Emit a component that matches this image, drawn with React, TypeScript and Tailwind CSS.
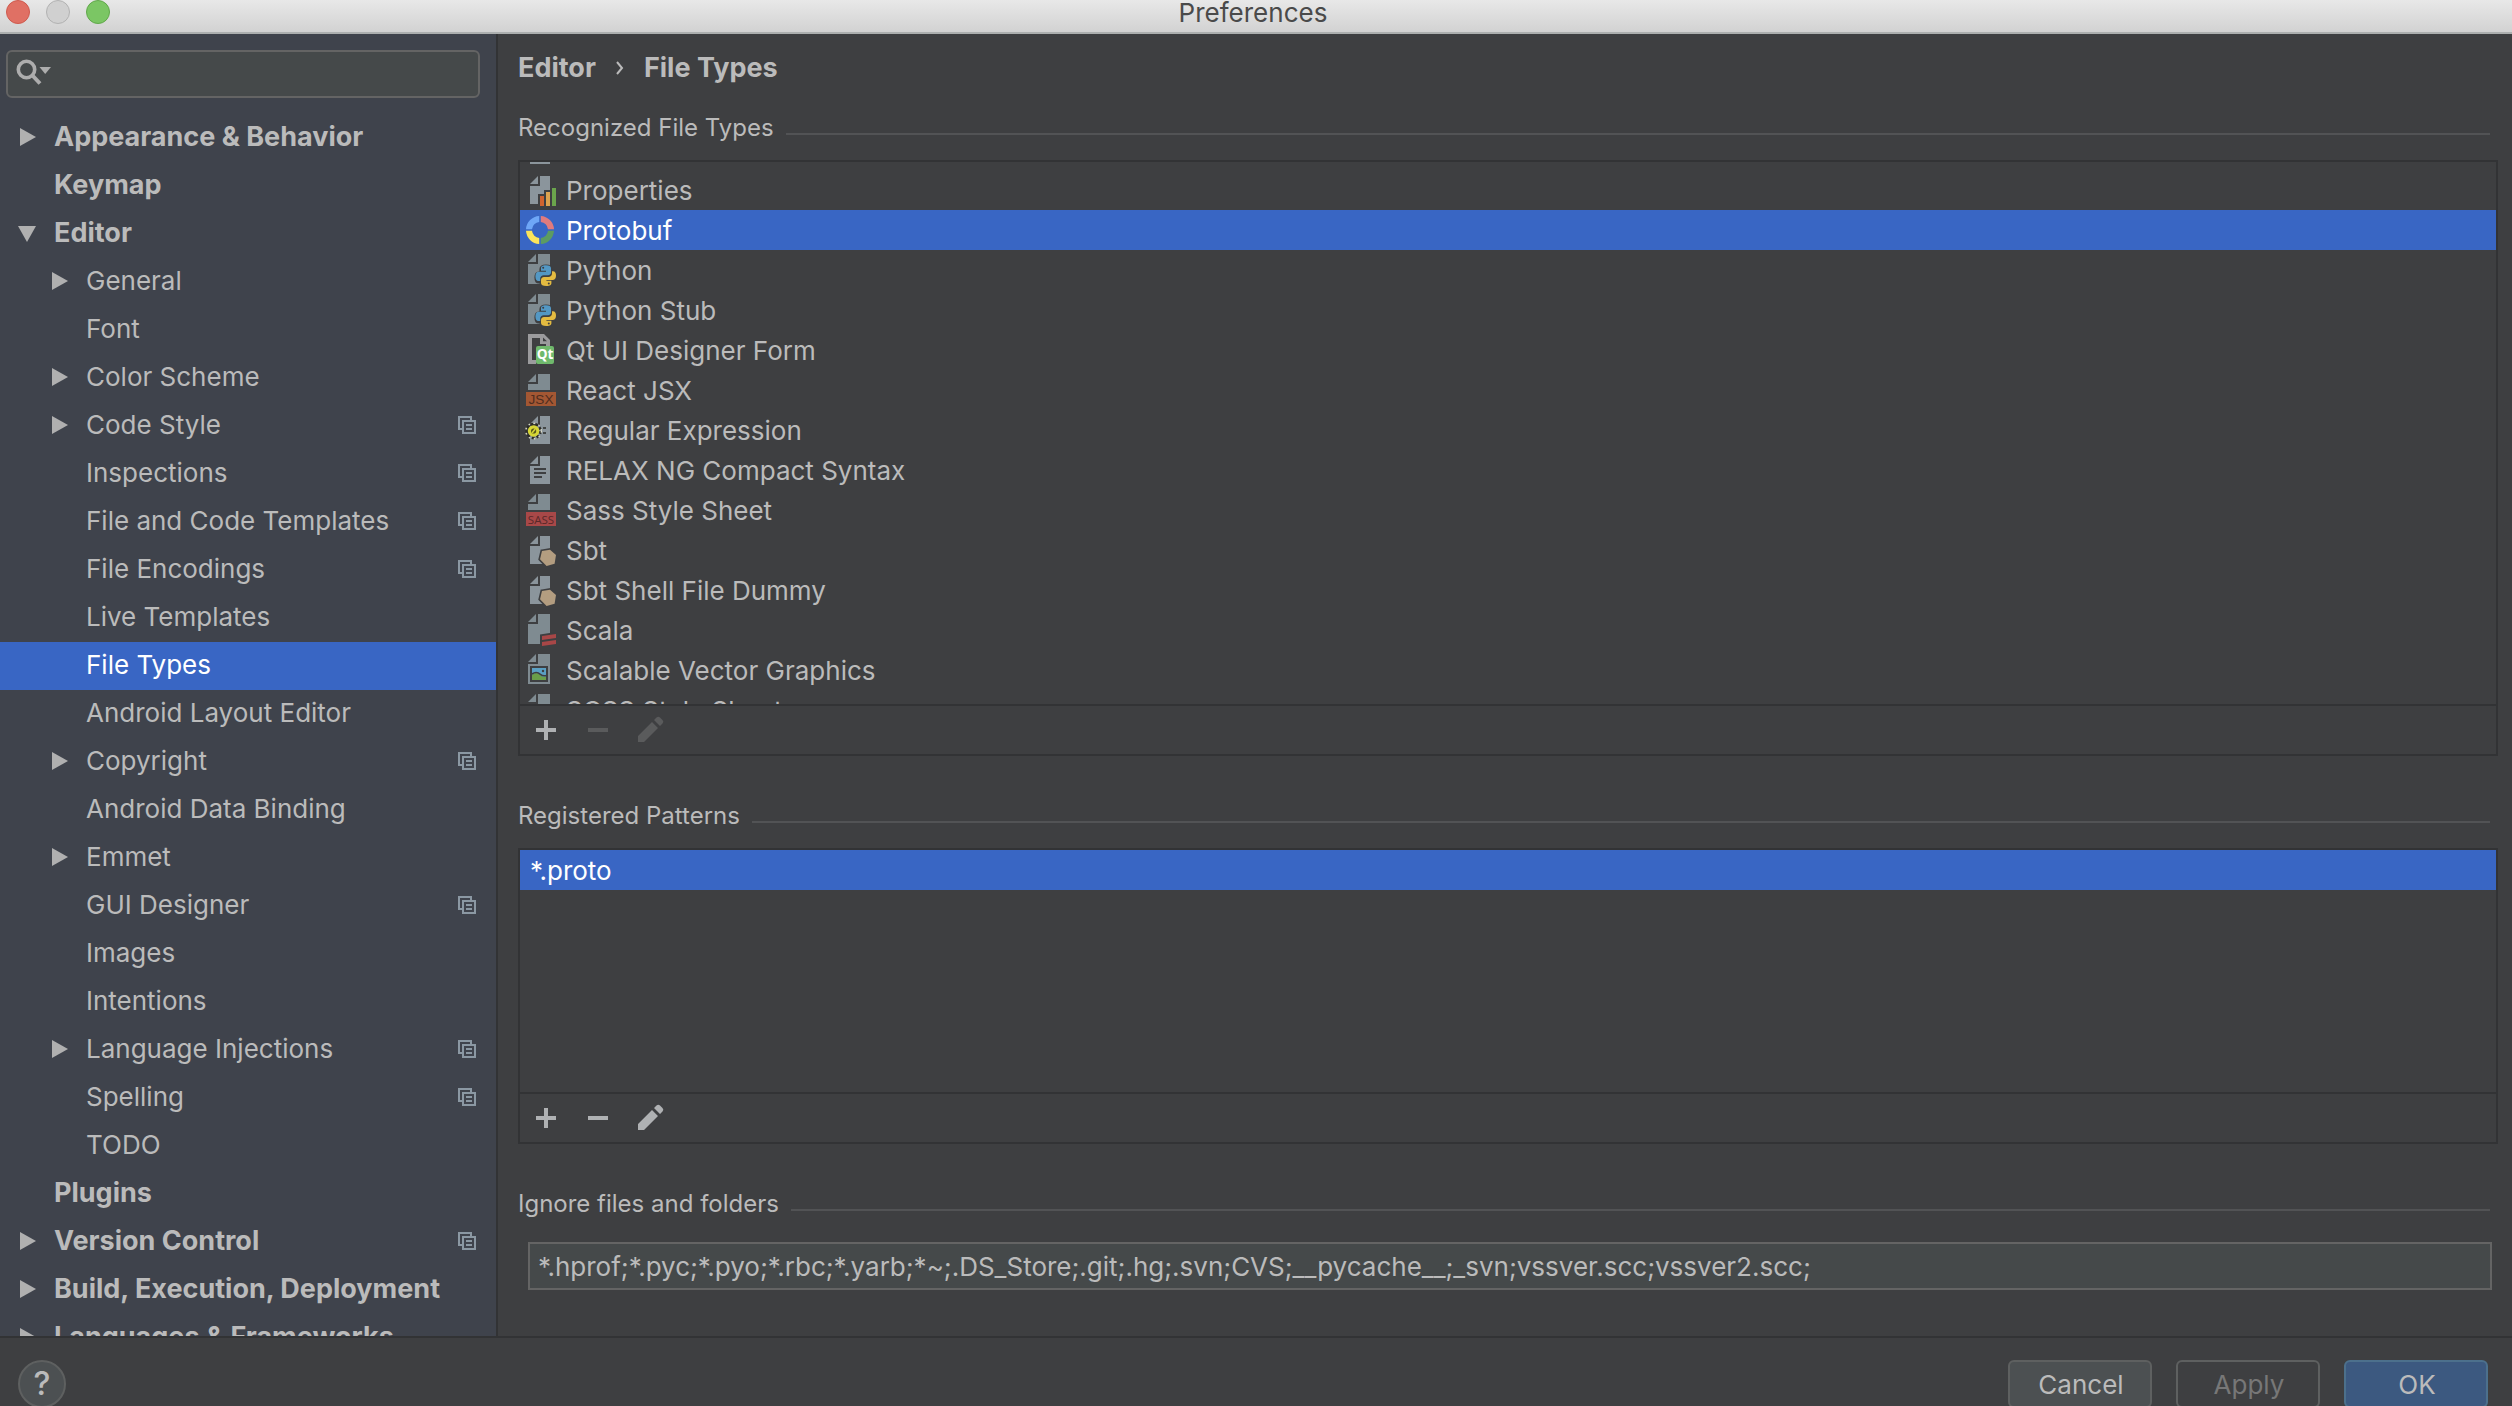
import React from 'react';
import clsx from 'clsx';

interface TreeItem {
  label: string;
  level: 0 | 1;
  arrow?: 'right' | 'down';
  project?: boolean;
}

interface FileType {
  name: string;
  icon: React.ReactNode;
}

const TREE: TreeItem[] = [
  { label: 'Appearance & Behavior', level: 0, arrow: 'right' },
  { label: 'Keymap', level: 0 },
  { label: 'Editor', level: 0, arrow: 'down' },
  { label: 'General', level: 1, arrow: 'right' },
  { label: 'Font', level: 1 },
  { label: 'Color Scheme', level: 1, arrow: 'right' },
  { label: 'Code Style', level: 1, arrow: 'right', project: true },
  { label: 'Inspections', level: 1, project: true },
  { label: 'File and Code Templates', level: 1, project: true },
  { label: 'File Encodings', level: 1, project: true },
  { label: 'Live Templates', level: 1 },
  { label: 'File Types', level: 1 },
  { label: 'Android Layout Editor', level: 1 },
  { label: 'Copyright', level: 1, arrow: 'right', project: true },
  { label: 'Android Data Binding', level: 1 },
  { label: 'Emmet', level: 1, arrow: 'right' },
  { label: 'GUI Designer', level: 1, project: true },
  { label: 'Images', level: 1 },
  { label: 'Intentions', level: 1 },
  { label: 'Language Injections', level: 1, arrow: 'right', project: true },
  { label: 'Spelling', level: 1, project: true },
  { label: 'TODO', level: 1 },
  { label: 'Plugins', level: 0 },
  { label: 'Version Control', level: 0, arrow: 'right', project: true },
  { label: 'Build, Execution, Deployment', level: 0, arrow: 'right' },
  { label: 'Languages & Frameworks', level: 0, arrow: 'right' },
];

const BG = '#3e3f41';

const Icon: React.FC<{ children: React.ReactNode }> = ({ children }) => (
  <svg viewBox="0 0 16 16" className="h-8 w-8 shrink-0" aria-hidden="true">
    {children}
  </svg>
);

// Narrow page, used by the older icons
const Page = () => <path d="M7 1v4H3zM8 1h5v14H3V6h5z" fill="#8b959c" />;

// Wide page, starts at the top edge of the grid
const WidePage = () => <path d="M6 0v4H2zM7 0h6v15H2V5h5z" fill="#7f8b91" />;

const BadgeIcon: React.FC<{ text: string; fill: string; color: string; size: number; font: string }> = ({ text, fill, color, size, font }) => (
  <Icon>
    <path d="M6 0v4H2zM7 0h6v8H2V5h5z" fill="#7f8b91" />
    <path d="M1 9h15v7H1z" fill={fill} />
    <text x="8.5" y="14.9" fontSize={size} textAnchor="middle" fill={color} fontFamily={font} fontWeight="500">
      {text}
    </text>
  </Icon>
);

const PlainIcon = () => (
  <Icon>
    <Page />
  </Icon>
);

const PropertiesIcon = () => (
  <Icon>
    <Page />
    <path d="M7 16v-6h3V8h3V6h3v10z" fill={BG} />
    <path d="M8 11h2v5H8z" fill="#d0642f" />
    <path d="M11 9h2v7h-2z" fill="#dda34f" />
    <path d="M14 7h2v9h-2z" fill="#6ba54c" />
  </Icon>
);

const ProtobufIcon = () => (
  <Icon>
    <path d="M1 7.6A7 7 0 0 1 7.6 1v3A4 4 0 0 0 4 7.6z" fill="#6ea6f7" />
    <path d="M8.4 1A7 7 0 0 1 15 7.6h-3A4 4 0 0 0 8.4 4z" fill="#e07b7e" />
    <path d="M1 8.4A7 7 0 0 0 7.6 15v-3A4 4 0 0 1 4 8.4z" fill="#fbe45b" />
    <path d="M8.4 15A7 7 0 0 0 15 8.4h-3A4 4 0 0 1 8.4 12z" fill="#5c9b62" />
  </Icon>
);

const PythonIcon = () => (
  <Icon>
    <WidePage />
    <g stroke={BG} strokeWidth="1.6" fill={BG}>
      <path d="M11 6c-2 0-2.5.7-2.5 1.6V9H11v.5H7.5C6.3 9.5 6 10.5 6 11.7s.5 2.3 1.5 2.3h1v-1.4c0-1 .7-1.6 1.7-1.6H12c.9 0 1.5-.7 1.5-1.5V7.6C13.5 6.6 12.7 6 11 6z" />
      <path d="M11.2 16c2 0 2.5-.7 2.5-1.5v-1.1h-2.5V13h3.3c1.2 0 1.5-1.2 1.5-2.2 0-1.300-.5-2.200-1.500-2.200h-.6v1.400c0 1-.8 1.700-1.800 1.700h-1.900c-.9 0-1.600.7-1.600 1.500v1.500c0 .9.900 1.300 2.600 1.300z" />
    </g>
    <path d="M11 5.600c-2 0-2.500.7-2.500 1.500v1.300H11v.5H7.400C6.300 8.900 5.700 9.900 5.700 11.200s.5 2.300 1.500 2.300h.9v-1.200c0-1 .8-1.700 1.800-1.700h2.100c.9 0 1.500-.7 1.500-1.500v-2c0-.9-.8-1.500-2.500-1.500z" fill="#5398c4" />
    <path d="M11.200 16c1.900 0 2.500-.6 2.500-1.500v-1.100h-2.500V13h3.300c1.100 0 1.500-1 1.500-2.200 0-1.300-.5-2.200-1.500-2.200H14v1.200c0 1-.8 1.700-1.800 1.700H10c-.9 0-1.500.7-1.500 1.500v1.500c0 1 .9 1.500 2.700 1.500z" fill="#e4bb41" />
    <circle cx="9.6" cy="6.9" r=".5" fill={BG} />
    <circle cx="12.4" cy="14.7" r=".5" fill={BG} />
  </Icon>
);

const QtIcon = () => (
  <Icon>
    <path d="M2 0h8l3 3v3h-2V5H8V2H4v11h2v2H2zM9.5 1.8v1.8h2z" fill="#9b9b9d" />
    <rect x="6" y="6" width="9" height="9" rx="1" fill="#6fb96c" />
    <text x="10.5" y="12.5" fontSize="6.8" textAnchor="middle" fill="#fff" fontFamily="Open Sans, sans-serif" fontWeight="700">
      Qt
    </text>
  </Icon>
);

const RegexpIcon = () => (
  <Icon>
    <Page />
    <circle cx="4.8" cy="8.5" r="3.4" fill="none" stroke="#2d2d28" strokeWidth="1.4" strokeDasharray="1.4 1" />
    <circle cx="4.8" cy="8.5" r="3.9" fill="none" stroke="#d8d8c8" strokeWidth=".7" strokeDasharray=".8 1.8" />
    <circle cx="4.8" cy="8.5" r="2.1" fill="#55551c" stroke="#d6d636" strokeWidth="1.6" />
    <path d="M4 9.5 5.6 7.5" stroke="#d6d636" strokeWidth=".8" />
    <path d="M9.5 7H11M9.5 9.5H11" stroke="#2d2d28" strokeWidth=".7" />
  </Icon>
);

const TextIcon = () => (
  <Icon>
    <Page />
    <path d="M5 7h6v1H5zM5 9h6v1H5zM5 11h4v1H5z" fill={BG} />
  </Icon>
);

const SbtIcon = () => (
  <Icon>
    <Page />
    <path d="M9 8.5 13 7.85 16 10.5 15.3 14.85 11.3 16 8 12.65z" fill="#b39d80" stroke={BG} strokeWidth="1.6" paintOrder="stroke" />
  </Icon>
);

const ScalaIcon = () => (
  <Icon>
    <WidePage />
    <path d="M8 10.2 16 9v7H8z" fill={BG} />
    <path d="M9 11l7-1v2l-7 1zM9 14l7-1v2l-7 1z" fill="#a84747" />
  </Icon>
);

const SvgIcon = () => (
  <Icon>
    <WidePage />
    <path d="M3 6h9v8H3z" fill={BG} />
    <path d="M4 7h7v6H4z" fill="#5aa0c4" />
    <path d="M4 13v-2.5C6 9 7 9.5 8 10.5s2 1 3 .8V13z" fill="#6a9f4a" />
    <path d="M4 10C6 8.7 7 9.2 8.2 10.2S10 11 11 10.8" fill="none" stroke={BG} strokeWidth=".8" />
    <circle cx="9.5" cy="8.5" r=".6" fill={BG} />
  </Icon>
);

const SASS_BADGE = { fill: '#a84848', color: '#592929', size: 5.8, font: 'Open Sans, sans-serif' };

const FILE_TYPES: FileType[] = [
  { name: 'Properties', icon: <PropertiesIcon /> },
  { name: 'Protobuf', icon: <ProtobufIcon /> },
  { name: 'Python', icon: <PythonIcon /> },
  { name: 'Python Stub', icon: <PythonIcon /> },
  { name: 'Qt UI Designer Form', icon: <QtIcon /> },
  { name: 'React JSX', icon: <BadgeIcon text="JSX" fill="#a35733" color="#4f2d1f" size={6.8} font="Liberation Sans, sans-serif" /> },
  { name: 'Regular Expression', icon: <RegexpIcon /> },
  { name: 'RELAX NG Compact Syntax', icon: <TextIcon /> },
  { name: 'Sass Style Sheet', icon: <BadgeIcon text="SASS" {...SASS_BADGE} /> },
  { name: 'Sbt', icon: <SbtIcon /> },
  { name: 'Sbt Shell File Dummy', icon: <SbtIcon /> },
  { name: 'Scala', icon: <ScalaIcon /> },
  { name: 'Scalable Vector Graphics', icon: <SvgIcon /> },
  { name: 'SCSS Style Sheet', icon: <BadgeIcon text="SCSS" {...SASS_BADGE} /> },
];

const Arrow: React.FC<{ direction?: 'right' | 'down' }> = ({ direction }) => (
  <svg viewBox="0 0 20 20" className="mr-4 h-5 w-5 shrink-0" fill="#b0b0b0" aria-hidden="true">
    {direction === 'right' && <path d="M2 1v18l16-9z" />}
    {direction === 'down' && <path d="M0 3h18L9 19z" />}
  </svg>
);

const ProjectIcon = () => (
  <svg viewBox="0 0 18 18" className="mr-5 h-[18px] w-[18px] shrink-0" fill="none" stroke="#8b98a3" strokeWidth="2" aria-hidden="true">
    <path d="M13 4V1H1v12h3M5 5h12v12H5zM8 9h6M8 13h6" />
  </svg>
);

const Toolbar: React.FC<{ name: string; readOnly?: boolean }> = ({ name, readOnly }) => (
  <div className="flex h-[50px] shrink-0 items-center border-t-2 border-[#323335] text-[#afb1b3]">
    <button type="button" aria-label={`Add ${name}`} className="flex w-[52px] justify-center">
      <svg viewBox="0 0 32 32" className="h-8 w-8" fill="currentColor">
        <path d="M14 6h4v8h8v4h-8v8h-4v-8H6v-4h8z" />
      </svg>
    </button>
    <button type="button" aria-label={`Remove ${name}`} disabled={readOnly} className="flex w-[52px] justify-center disabled:text-[#5a5b5c]">
      <svg viewBox="0 0 32 32" className="h-8 w-8" fill="currentColor">
        <path d="M6 14h20v4H6z" />
      </svg>
    </button>
    <button type="button" aria-label={`Edit ${name}`} disabled={readOnly} className="flex w-[52px] justify-center disabled:text-[#5a5b5c]">
      <svg viewBox="0 0 32 32" className="h-8 w-8" fill="currentColor">
        <path d="M4 22 18 8l6 6-14 14H4zM20 6l2.500-2.500a2.500 2.500 0 0 1 3.500 0l2.500 2.500a2.500 2.500 0 0 1 0 3.500L26 12z" />
      </svg>
    </button>
  </div>
);

const SectionTitle: React.FC<{ children: React.ReactNode }> = ({ children }) => (
  <div className="flex h-8 shrink-0 items-center gap-3 pr-2 text-2xl leading-8">
    {children}
    <div className="mt-3 h-0.5 flex-1 bg-[#525355]" />
  </div>
);

const App: React.FC = () => {
  const [page, setPage] = React.useState('File Types');
  const [selected, setSelected] = React.useState('Protobuf');
  const [ignored, setIgnored] = React.useState(
    '*.hprof;*.pyc;*.pyo;*.rbc;*.yarb;*~;.DS_Store;.git;.hg;.svn;CVS;__pycache__;_svn;vssver.scc;vssver2.scc;'
  );

  return (
    <div className="flex h-screen flex-col overflow-hidden bg-[#3e3f41] font-['Inter',sans-serif] text-[26px] leading-8 text-[#bbbbbb]">
      {/* Title bar */}
      <header className="grid h-[34px] shrink-0 grid-cols-[1fr_auto_1fr] items-start border-b-2 border-[#acafaf] bg-linear-to-b from-[#e8e8e8] to-[#d2d2d2] pr-1.5">
        <div className="flex gap-4 pl-1.5">
          <button type="button" aria-label="Close" className="h-6 w-6 rounded-full border border-[#cf5a4e] bg-[#e07064]" />
          <button type="button" aria-label="Minimize" className="h-6 w-6 rounded-full border border-[#b2b2b2] bg-[#d0d0d0]" />
          <button type="button" aria-label="Zoom" className="h-6 w-6 rounded-full border border-[#61a84b] bg-[#7bc664]" />
        </div>
        <h1 className="leading-[26px] text-[#4a4a4a]">Preferences</h1>
      </header>

      <div className="flex min-h-0 flex-1">
        {/* Settings tree */}
        <aside className="flex w-[498px] shrink-0 flex-col border-r-2 border-[#323335] bg-[#3f434c] pt-4">
          <div className="mr-4 ml-1.5 flex h-12 shrink-0 items-center rounded-md border-2 border-[#646464] bg-[#45494a] px-2 pb-1">
            <svg viewBox="0 0 36 26" className="h-[26px] w-9 shrink-0" fill="none" stroke="#adadad" aria-hidden="true">
              <circle cx="10.5" cy="10.5" r="8.2" strokeWidth="3.6" />
              <path d="m16 16 8 8.5" strokeWidth="4" />
              <path d="M23.5 8H35l-5.8 7z" fill="#adadad" stroke="none" />
            </svg>
            <input type="text" aria-label="Search settings" className="min-w-0 flex-1 bg-transparent outline-none" />
          </div>
          <ul className="mt-4 min-h-0 flex-1 overflow-hidden">
            {TREE.map((item) => (
              <li key={item.label}>
                <button
                  type="button"
                  onClick={() => setPage(item.label)}
                  className={clsx(
                    'flex h-12 w-full items-center pb-0.5 text-left whitespace-nowrap',
                    item.level === 0 ? 'pl-[18px] text-[27px] font-bold' : 'pl-[50px]',
                    item.label === page && 'bg-[#3966c4] text-white'
                  )}
                >
                  <Arrow direction={item.arrow} />
                  <span className="flex-1">{item.label}</span>
                  {item.project && <ProjectIcon />}
                </button>
              </li>
            ))}
          </ul>
        </aside>

        {/* Page content */}
        <main className="flex min-w-0 flex-1 flex-col pt-[18px] pr-3.5 pb-[46px] pl-5">
          <nav aria-label="Breadcrumb" className="flex shrink-0 items-center gap-5 text-[27px] leading-8 font-bold">
            <span>Editor</span>
            <svg viewBox="0 0 8 16" className="h-4 w-2" fill="none" stroke="#bbbbbb" strokeWidth="2" aria-hidden="true">
              <path d="m1 2 5 6-5 6" />
            </svg>
            <span>File Types</span>
          </nav>

          <div className="mt-7 flex min-h-0 flex-1 flex-col">
            <SectionTitle>
              <h2>Recognized File Types</h2>
            </SectionTitle>
            <div className="mt-4 flex min-h-0 flex-1 flex-col border-2 border-[#323335]">
              <div className="min-h-0 flex-1 overflow-hidden">
                {/* Tail of the row that is scrolled out at the top */}
                <div className="flex h-2 items-end overflow-hidden pb-1 pl-1">
                  <PlainIcon />
                </div>
                <ul>
                  {FILE_TYPES.map((type) => (
                    <li key={type.name}>
                      <button
                        type="button"
                        onClick={() => setSelected(type.name)}
                        className={clsx(
                          'flex h-10 w-full items-center gap-2.5 pl-1 text-left',
                          type.name === selected && 'bg-[#3966c4] text-white'
                        )}
                      >
                        {type.icon}
                        <span className="pt-0.5">{type.name}</span>
                      </button>
                    </li>
                  ))}
                </ul>
              </div>
              <Toolbar name="file type" readOnly />
            </div>
          </div>

          <div className="mt-11 flex shrink-0 flex-col">
            <SectionTitle>
              <h2>Registered Patterns</h2>
            </SectionTitle>
            <div className="mt-4 border-2 border-[#323335]">
              <ul className="h-[242px]">
                <li className="flex h-10 items-center bg-[#3966c4] pt-0.5 pl-2.5 text-white">*.proto</li>
              </ul>
              <Toolbar name="pattern" />
            </div>
          </div>

          <div className="mt-11 flex shrink-0 flex-col">
            <SectionTitle>
              <label htmlFor="ignored">Ignore files and folders</label>
            </SectionTitle>
            <input
              id="ignored"
              type="text"
              value={ignored}
              onChange={(e) => setIgnored(e.target.value)}
              className="mt-[22px] mr-1.5 ml-2.5 h-12 border-2 border-[#646464] bg-[#45494a] px-2 outline-none"
            />
          </div>
        </main>
      </div>

      {/* Footer */}
      <footer className="flex h-[70px] shrink-0 items-start gap-6 border-t-2 border-[#323335] pt-[22px] pr-6 pl-[18px]">
        <button type="button" aria-label="Help" className="mr-auto flex h-12 w-12 items-center justify-center rounded-full border-2 border-[#5e6060] bg-[#4c5052] text-[32px] font-medium">
          ?
        </button>
        <button type="button" className="h-12 w-36 rounded-md border-2 border-[#5e6060] bg-[#4c5052] pt-0.5 pl-0.5">
          Cancel
        </button>
        <button type="button" disabled className="h-12 w-36 rounded-md border-2 border-[#5e6060] pt-0.5 pl-0.5 text-[#777777]">
          Apply
        </button>
        <button type="button" className="h-12 w-36 rounded-md border-2 border-[#4c708c] bg-[#3c5980] pt-0.5 pl-0.5">
          OK
        </button>
      </footer>
    </div>
  );
};

export default App;
